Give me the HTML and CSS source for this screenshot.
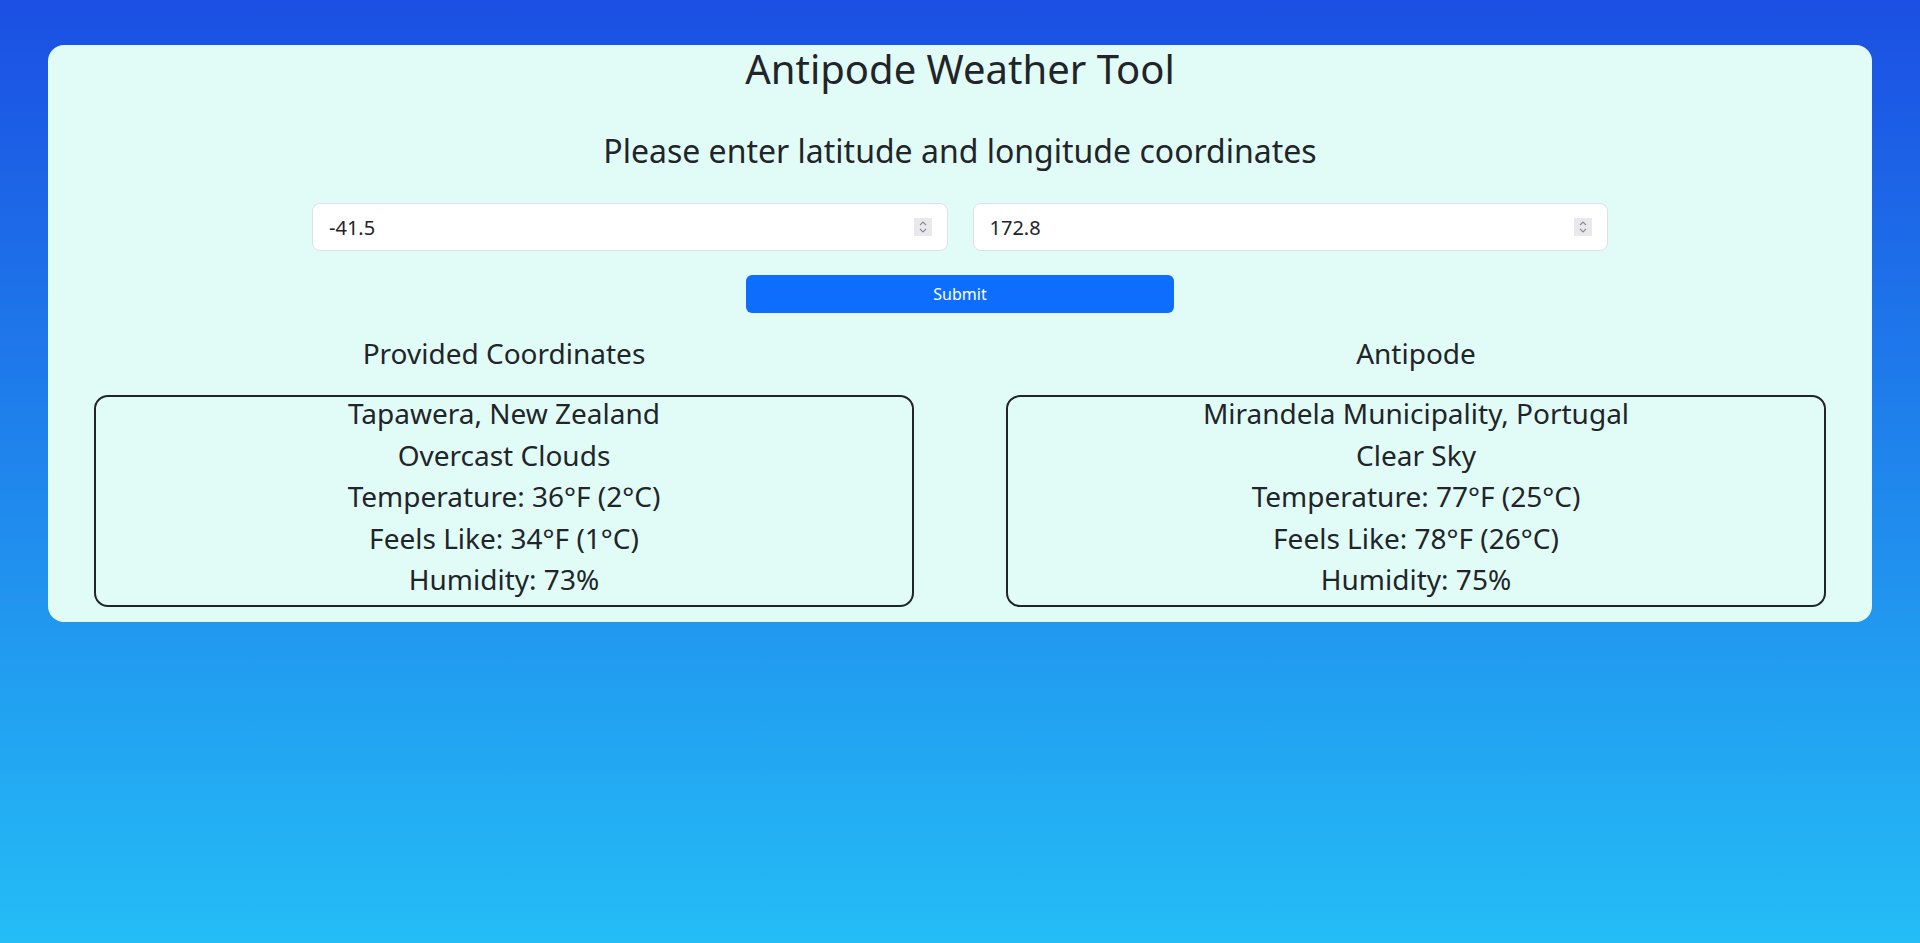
FILE: index.html
```html
<!DOCTYPE html>
<html lang="en">
<head>
<meta charset="utf-8">
<title>Antipode Weather Tool</title>
<link rel="stylesheet" href="styles.css">
</head>
<body>
<main class="card">
  <h1 class="title">Antipode Weather Tool</h1>
  <h2 class="subtitle">Please enter latitude and longitude coordinates</h2>
  <form class="coords">
    <div class="field">
      <input class="coord-input" type="text" value="-41.5" aria-label="Latitude">
      <span class="spinner"><svg width="10" height="14" viewBox="0 0 10 14"><path d="M2 5 L5 2 L8 5" fill="none" stroke="#8a8a92" stroke-width="1.1"/><path d="M2 9 L5 12 L8 9" fill="none" stroke="#8a8a92" stroke-width="1.1"/></svg></span>
    </div>
    <div class="field">
      <input class="coord-input" type="text" value="172.8" aria-label="Longitude">
      <span class="spinner"><svg width="10" height="14" viewBox="0 0 10 14"><path d="M2 5 L5 2 L8 5" fill="none" stroke="#8a8a92" stroke-width="1.1"/><path d="M2 9 L5 12 L8 9" fill="none" stroke="#8a8a92" stroke-width="1.1"/></svg></span>
    </div>
  </form>
  <button class="submit" type="button">Submit</button>
  <section class="results">
    <div class="col">
      <h3 class="col-title">Provided Coordinates</h3>
      <div class="box">
        <p>Tapawera, New Zealand</p>
        <p>Overcast Clouds</p>
        <p>Temperature: 36°F (2°C)</p>
        <p>Feels Like: 34°F (1°C)</p>
        <p>Humidity: 73%</p>
      </div>
    </div>
    <div class="col">
      <h3 class="col-title">Antipode</h3>
      <div class="box">
        <p>Mirandela Municipality, Portugal</p>
        <p>Clear Sky</p>
        <p>Temperature: 77°F (25°C)</p>
        <p>Feels Like: 78°F (26°C)</p>
        <p>Humidity: 75%</p>
      </div>
    </div>
  </section>
</main>
</body>
</html>
```
FILE: styles.css
```css
html, body {
  margin: 0;
  min-height: 100vh;
}
body {
  background: linear-gradient(to bottom, #1b4fe3 0%, #24bdf6 100%);
  background-attachment: fixed;
  font-family: "Noto Sans", "Open Sans", sans-serif;
  color: #212529;
  padding: 45px 48px;
  box-sizing: border-box;
}
.card {
  background: #e1fcf7;
  border-radius: 16px;
  padding: 0 0 15px;
}
.title {
  font-size: 40px;
  line-height: 48px;
  font-weight: 400;
  text-align: center;
  margin: 0 0 39px;
}
.subtitle {
  font-size: 32px;
  line-height: 38.4px;
  font-weight: 400;
  text-align: center;
  margin: 0 0 33px;
}
.coords {
  width: 1296px;
  margin: 0 auto;
  display: grid;
  grid-template-columns: 1fr 1fr;
  column-gap: 25px;
}
.field {
  position: relative;
}
.coord-input {
  display: block;
  width: 100%;
  box-sizing: border-box;
  height: 48px;
  padding: 0 16px;
  font-family: inherit;
  font-size: 20px;
  color: #212529;
  background: #fff;
  border: 1px solid #dee2e6;
  border-radius: 8px;
  outline: none;
}
.spinner {
  position: absolute;
  right: 16px;
  top: 15px;
  width: 18px;
  height: 18px;
  background: #e9e9ed;
  display: flex;
  align-items: center;
  justify-content: center;
}
.submit {
  display: block;
  width: 428px;
  height: 38px;
  margin: 24px auto 0;
  background: #0d6efd;
  color: #fff;
  border: none;
  border-radius: 6px;
  font-family: inherit;
  font-size: 16px;
  padding: 0;
}
.results {
  display: grid;
  grid-template-columns: 1fr 1fr;
  margin-top: 24px;
}
.col {
  text-align: center;
}
.col-title {
  font-size: 28px;
  line-height: 33.6px;
  font-weight: 400;
  margin: 0;
}
.box {
  box-sizing: border-box;
  width: 90%;
  margin: 24px auto 0;
  border: 2px solid #212529;
  border-radius: 14px;
}
.box p {
  font-size: 28px;
  line-height: 33.6px;
  margin: 0 0 8px;
}
```
